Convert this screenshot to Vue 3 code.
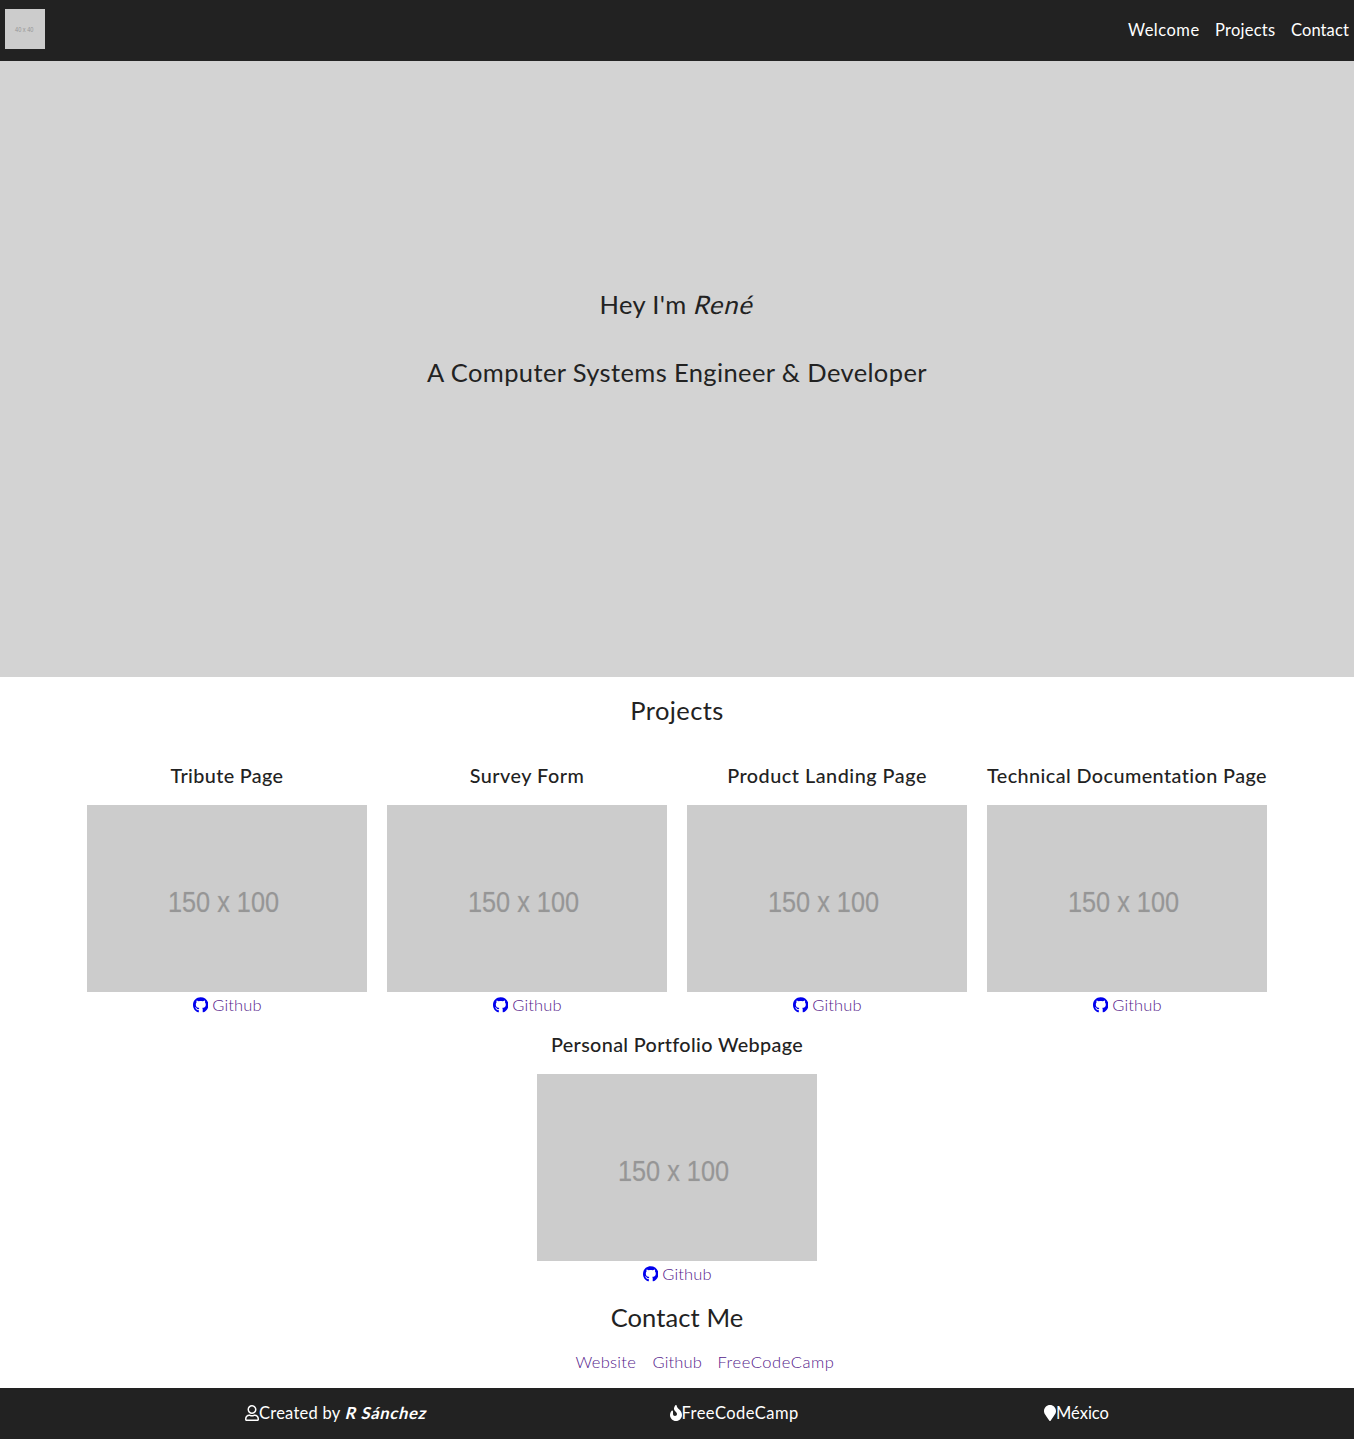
<script setup>
const projects = [
  { title: 'Tribute Page', tracking: 0.36 },
  { title: 'Survey Form', tracking: 0.5 },
  { title: 'Product Landing Page', tracking: 0.52 },
  { title: 'Technical Documentation Page', tracking: 0.42 },
  { title: 'Personal Portfolio Webpage', tracking: 0.35 },
]
</script>

<template>
  <div class="page">
    <header class="navbar">
      <svg class="logo" viewBox="0 0 40 40" role="img" aria-label="Logo">
        <rect width="40" height="40" fill="#ccc" />
        <text x="10" y="22.7" font-size="6.8" textLength="18.5" lengthAdjust="spacingAndGlyphs">40 x 40</text>
      </svg>
      <nav class="menu">
        <a class="welcome">Welcome</a>
        <a class="to-projects">Projects</a>
        <a class="to-contact">Contact</a>
      </nav>
    </header>

    <section class="hero">
      <h1>Hey I'm <em>René</em></h1>
      <h1>A Computer Systems Engineer &amp; Developer</h1>
    </section>

    <section class="projects">
      <h2>Projects</h2>
      <div class="grid">
        <article v-for="p in projects" :key="p.title" class="card">
          <h3 :style="{ letterSpacing: p.tracking + 'px' }">{{ p.title }}</h3>
          <svg class="thumb" viewBox="0 0 280 187">
            <rect width="280" height="187" fill="#ccc" />
            <text x="81" y="106.5" font-size="29" textLength="111" lengthAdjust="spacingAndGlyphs">150 x 100</text>
          </svg>
          <div class="repo">
            <svg class="octocat" viewBox="0 0 496 512">
              <path d="M244.8 8C106.1 8 0 113.3 0 252c0 110.9 69.8 205.8 169.5 239.2 12.8 2.3 17.3-5.6 17.3-12.1 0-6.2-.3-40.4-.3-61.4 0 0-70 15-84.7-29.8 0 0-11.4-29.1-27.8-36.6 0 0-22.9-15.7 1.6-15.4 0 0 24.9 2 38.6 25.8 21.9 38.6 58.6 27.5 72.9 20.9 2.3-16 8.8-27.1 16-33.7-55.9-6.2-112.3-14.3-112.3-110.5 0-27.5 7.6-41.3 23.6-58.9-2.6-6.5-11.1-33.3 2.6-67.9 20.9-6.5 69 27 69 27 20-5.6 41.5-8.5 62.8-8.5s42.8 2.9 62.8 8.5c0 0 48.1-33.6 69-27 13.7 34.7 5.2 61.4 2.6 67.9 16 17.7 25.8 31.5 25.8 58.9 0 96.5-58.9 104.2-114.8 110.5 9.2 7.9 17 22.9 17 46.4 0 33.7-.3 75.4-.3 83.6 0 6.5 4.6 14.4 17.3 12.1C428.2 457.8 496 362.9 496 252 496 113.3 383.5 8 244.8 8z" />
            </svg>
            <a>Github</a>
          </div>
        </article>
      </div>
    </section>

    <section class="contact">
      <h2>Contact Me</h2>
      <div class="links">
        <a class="website">Website</a>
        <a class="github">Github</a>
        <a class="fcc">FreeCodeCamp</a>
      </div>
    </section>

    <footer class="footer">
      <div class="note author">
        <svg width="14" height="16" viewBox="0 0 448 512">
          <path d="M313.6 304c-28.7 0-42.5 16-89.6 16-47.1 0-60.8-16-89.6-16C60.2 304 0 364.2 0 438.4V464c0 26.5 21.5 48 48 48h352c26.5 0 48-21.5 48-48v-25.6c0-74.2-60.2-134.4-134.4-134.4zM400 464H48v-25.6c0-47.6 38.8-86.4 86.4-86.4 14.6 0 38.3 16 89.6 16 51.7 0 74.9-16 89.6-16 47.6 0 86.4 38.8 86.4 86.4V464zM224 288c79.5 0 144-64.5 144-144S303.5 0 224 0 80 64.5 80 144s64.5 144 144 144zm0-240c52.9 0 96 43.1 96 96s-43.1 96-96 96-96-43.1-96-96 43.1-96 96-96z" />
        </svg>
        <span>Created by <em>R Sánchez</em></span>
      </div>
      <div class="note camp">
        <svg width="12" height="16" viewBox="0 0 384 512">
          <path d="M216 23.86c0-23.8-30.65-32.77-44.15-13.04C48 191.85 224 200 224 288c0 35.63-29.11 64.46-64.85 63.99-35.17-.45-63.15-29.77-63.15-64.94v-85.51c0-21.7-26.47-32.23-41.43-16.5C27.8 213.16 0 261.33 0 320c0 105.87 86.13 192 192 192s192-86.13 192-192c0-170.29-168-193-168-296.14z" />
        </svg>
        <span>FreeCodeCamp</span>
      </div>
      <div class="note place">
        <svg width="12" height="16" viewBox="0 0 384 512">
          <path d="M172.268 501.67C26.97 291.031 0 269.413 0 192 0 85.961 85.961 0 192 0s192 85.961 192 192c0 77.413-26.97 99.031-172.268 309.67-9.535 13.774-29.93 13.773-39.464 0z" />
        </svg>
        <span>México</span>
      </div>
    </footer>
  </div>
</template>

<style>
body {
  margin: 0;
  background: #fff;
}
</style>

<style scoped>
.page {
  font-family: Lato, sans-serif;
  font-size: 16.5px;
  line-height: 20px;
  color: #222;
  font-variant-ligatures: none;
}
svg {
  display: block;
  flex: none;
}
svg text {
  font-family: "Liberation Sans", sans-serif;
  fill: #969696;
}
h1, h2, h3 {
  margin: 0;
  white-space: nowrap;
}
h1, h2 {
  font-size: 25.5px;
  font-weight: 400;
  line-height: 30px;
  letter-spacing: 0.38px;
}
a {
  white-space: nowrap;
}
em {
  display: inline-block;
  margin-left: 1px;
  font-style: normal;
  transform: skewX(-14deg);
}

.navbar {
  box-sizing: border-box;
  height: 61px;
  padding: 9px 5px 0;
  display: flex;
  justify-content: space-between;
  background: #222;
}
.logo {
  width: 40px;
  height: 40px;
}
.menu {
  display: flex;
  gap: 16px;
  padding-top: 11px;
  color: #fff;
}
.menu .welcome { width: 71px; letter-spacing: 0.5px; }
.menu .to-projects { width: 60px; letter-spacing: 0.25px; }
.menu .to-contact { width: 58px; letter-spacing: 0.1px; }

.hero {
  height: 616px;
  display: flex;
  flex-direction: column;
  align-items: center;
  justify-content: center;
  gap: 38px;
  background: #d3d3d3;
}
.hero h1:last-child {
  margin-bottom: 63px;
}
.hero em {
  letter-spacing: 0.9px;
}

.projects h2,
.contact h2 {
  text-align: center;
}
.projects h2 {
  padding-top: 18px;
  letter-spacing: 0.4px;
}
.grid {
  display: flex;
  flex-wrap: wrap;
  justify-content: center;
  gap: 19px 20px;
  margin-top: 40px;
}
.card {
  width: 280px;
  height: 250px;
  display: flex;
  flex-direction: column;
  align-items: center;
}
.card h3 {
  flex: none;
  height: 40px;
  font-size: 19.8px;
  font-weight: 500;
  line-height: 20px;
}
.thumb {
  width: 280px;
  height: 187px;
}
.thumb text {
  stroke: #969696;
  stroke-opacity: 0.3;
  stroke-width: 0.7px;
}
.repo {
  display: flex;
  align-items: center;
  gap: 4px;
  padding-top: 3px;
}
.octocat {
  width: 15.5px;
  height: 16px;
  fill: #0000ee;
}
.repo a {
  width: 49px;
}
.repo a,
.links a {
  font-weight: 300;
  letter-spacing: 0.15px;
  color: #551a8b;
}

.contact {
  padding-top: 18px;
}
.contact h2 {
  letter-spacing: 0.1px;
}
.links {
  display: flex;
  justify-content: center;
  gap: 16px;
  padding: 20px 0 16px 56px;
}
.links .website { width: 61px; letter-spacing: 0.3px; }
.links .github { width: 49px; }
.links .fcc { width: 117px; letter-spacing: 0.55px; }

.footer {
  box-sizing: border-box;
  height: 51px;
  display: flex;
  justify-content: space-between;
  padding: 15px 245px 0;
  background: #222;
  color: #fff;
}
.note {
  display: flex;
  white-space: nowrap;
}
.note svg {
  margin-top: 2px;
  fill: #fff;
}
.author { width: 180px; letter-spacing: 0.25px; }
.author em { font-weight: 700; letter-spacing: 0.7px; }
.camp { width: 130px; letter-spacing: 0.45px; }
.place { width: 65px; }
</style>
